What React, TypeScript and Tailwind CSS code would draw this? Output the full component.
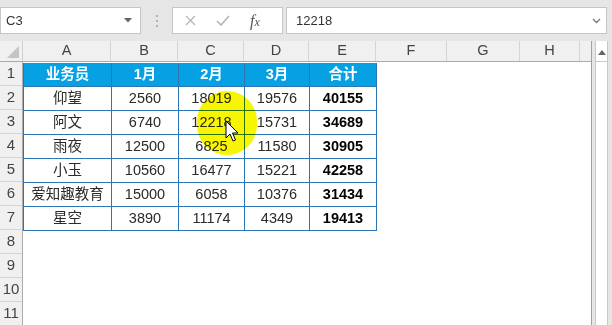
import React from "react";

const cols = [
  { k: "A", w: "w-[88px]" },
  { k: "B", w: "w-[67px]" },
  { k: "C", w: "w-[66px]" },
  { k: "D", w: "w-[65px]" },
  { k: "E", w: "w-[67px]" },
  { k: "F", w: "w-[71px]" },
  { k: "G", w: "w-[73px]" },
  { k: "H", w: "w-[60px]" },
];

const data: string[][] = [
  ["仰望", "2560", "18019", "19576", "40155"],
  ["阿文", "6740", "12218", "15731", "34689"],
  ["雨夜", "12500", "6825", "11580", "30905"],
  ["小玉", "10560", "16477", "15221", "42258"],
  ["爱知趣教育", "15000", "6058", "10376", "31434"],
  ["星空", "3890", "11174", "4349", "19413"],
];

const head = ["业务员", "1月", "2月", "3月", "合计"];
const tw = ["w-[88px]", "w-[67px]", "w-[66px]", "w-[65px]", "w-[67px]"];

export default function App() {
  const font = { fontFamily: '"Liberation Sans", "Noto Sans CJK SC", Arial, sans-serif' };
  return (
    <div className="w-[612px] h-[325px] overflow-hidden bg-[#e6e6e6] flex flex-col" style={font}>
      {/* toolbar */}
      <div className="h-[41px] shrink-0 flex items-start pt-[7px]">
        <div className="w-[141px] h-[27px] bg-white border border-[#c6c6c6] flex items-center justify-between pl-[5px] pr-[8px]">
          <span className="text-[13px] text-[#333]">C3</span>
          <svg width="8" height="5" viewBox="0 0 8 5"><path d="M0 0 H8 L4 4.5 Z" fill="#666" /></svg>
        </div>
        <div className="w-[31px] h-[27px] flex flex-col items-center justify-center gap-[3px]">
          <span className="w-[2px] h-[2px] bg-[#b0b0b0]" />
          <span className="w-[2px] h-[2px] bg-[#b0b0b0]" />
          <span className="w-[2px] h-[2px] bg-[#b0b0b0]" />
        </div>
        <div className="w-[111px] h-[27px] bg-white border border-[#c6c6c6] flex items-center pl-[12px] gap-[20px]">
          <svg width="11" height="11" viewBox="0 0 11 11"><path d="M1 1 L10 10 M10 1 L1 10" stroke="#b5b5b5" strokeWidth="1.3" /></svg>
          <svg width="14" height="11" viewBox="0 0 14 11"><path d="M1 6 L5 10 L13 1" stroke="#b5b5b5" strokeWidth="1.6" fill="none" /></svg>
          <span className="text-[16px] italic text-[#555] leading-none" style={{ fontFamily: '"Liberation Serif", serif' }}>
            f<span className="text-[12px]">x</span>
          </span>
        </div>
        <div className="w-[3px]" />
        <div className="w-[321px] h-[27px] bg-white border border-[#c6c6c6] flex items-center justify-between pl-[9px] pr-[5px]">
          <span className="text-[13px] text-[#333]">12218</span>
          <svg width="9" height="6" viewBox="0 0 9 6"><path d="M1 1 L4.5 4.5 L8 1" stroke="#777" strokeWidth="1.3" fill="none" /></svg>
        </div>
      </div>

      {/* sheet */}
      <div className="flex flex-1 min-h-0">
        <div className="w-[591px] flex flex-col bg-white relative">
          {/* column headers */}
          <div className="h-[21px] flex bg-[#f0f0f0] border-b border-[#ababab]">
            <div className="w-[23px] border-r border-[#d0d0d0] relative flex items-end justify-end pr-[3px] pb-[3px]">
              <svg width="12" height="12" viewBox="0 0 12 12"><path d="M12 0 V12 H0 Z" fill="#c4c4c4" /></svg>
            </div>
            {cols.map((c) => (
              <div key={c.k} className={`${c.w} border-r border-[#d5d5d5] flex items-center justify-center text-[14.5px] text-[#444]`}>
                {c.k}
              </div>
            ))}
          </div>
          {/* body */}
          <div className="flex flex-1">
            <div className="w-[23px] bg-[#f0f0f0] border-r border-[#ababab] flex flex-col">
              {Array.from({ length: 11 }, (_, i) => (
                <div key={i} className="h-[24px] shrink-0 border-b border-[#d5d5d5] flex items-center justify-center text-[15px] text-[#444]">
                  {i + 1}
                </div>
              ))}
            </div>
            <div className="flex-1 relative">
              <div className="inline-flex flex-col border-l border-[#2e75b6]">
                <div className="flex bg-[#06a1e3]">
                  {head.map((h, i) => (
                    <div key={h} className={`${tw[i]} h-[24px] border-r border-b border-[#2e75b6] flex items-center justify-center text-white font-bold text-[14.5px]`}>
                      {h}
                    </div>
                  ))}
                </div>
                {data.map((r, ri) => (
                  <div key={ri} className="flex">
                    {r.map((v, ci) => (
                      <div
                        key={ci}
                        className={`${tw[ci]} h-[24px] border-r border-b border-[#2e75b6] flex items-center justify-center text-[14.5px] text-[#2a2a2a] ${ci === 4 ? "font-bold text-black" : ""}`}
                      >
                        {v}
                      </div>
                    ))}
                  </div>
                ))}
              </div>
              {/* yellow highlight */}
              <div className="absolute left-[174px] top-[29px] w-[60px] h-[64px] rounded-full bg-[#f7f500] mix-blend-multiply" />
              {/* cursor */}
              <svg className="absolute left-[202px] top-[58px]" width="15" height="23" viewBox="0 0 15 23">
                <path d="M1 1 L1 18 L5 14 L8 21 L10.5 20 L7.5 13 L13 13 Z" fill="white" stroke="black" strokeWidth="1" strokeLinejoin="round" />
              </svg>
            </div>
          </div>
        </div>
        {/* scrollbar */}
        <div className="w-[21px] bg-[#e6e6e6] border-l border-[#a0a0a0] flex pl-[3px] pr-[4px]">
          <div className="flex-1 bg-white border-x border-[#c8c8c8] flex flex-col">
            <div className="h-[19px] mt-[2px] border-b border-[#c8c8c8] flex items-center justify-center">
              <svg width="8" height="5" viewBox="0 0 8 5"><path d="M0 5 H8 L4 0 Z" fill="#666" /></svg>
            </div>
          </div>
        </div>
      </div>
    </div>
  );
}
